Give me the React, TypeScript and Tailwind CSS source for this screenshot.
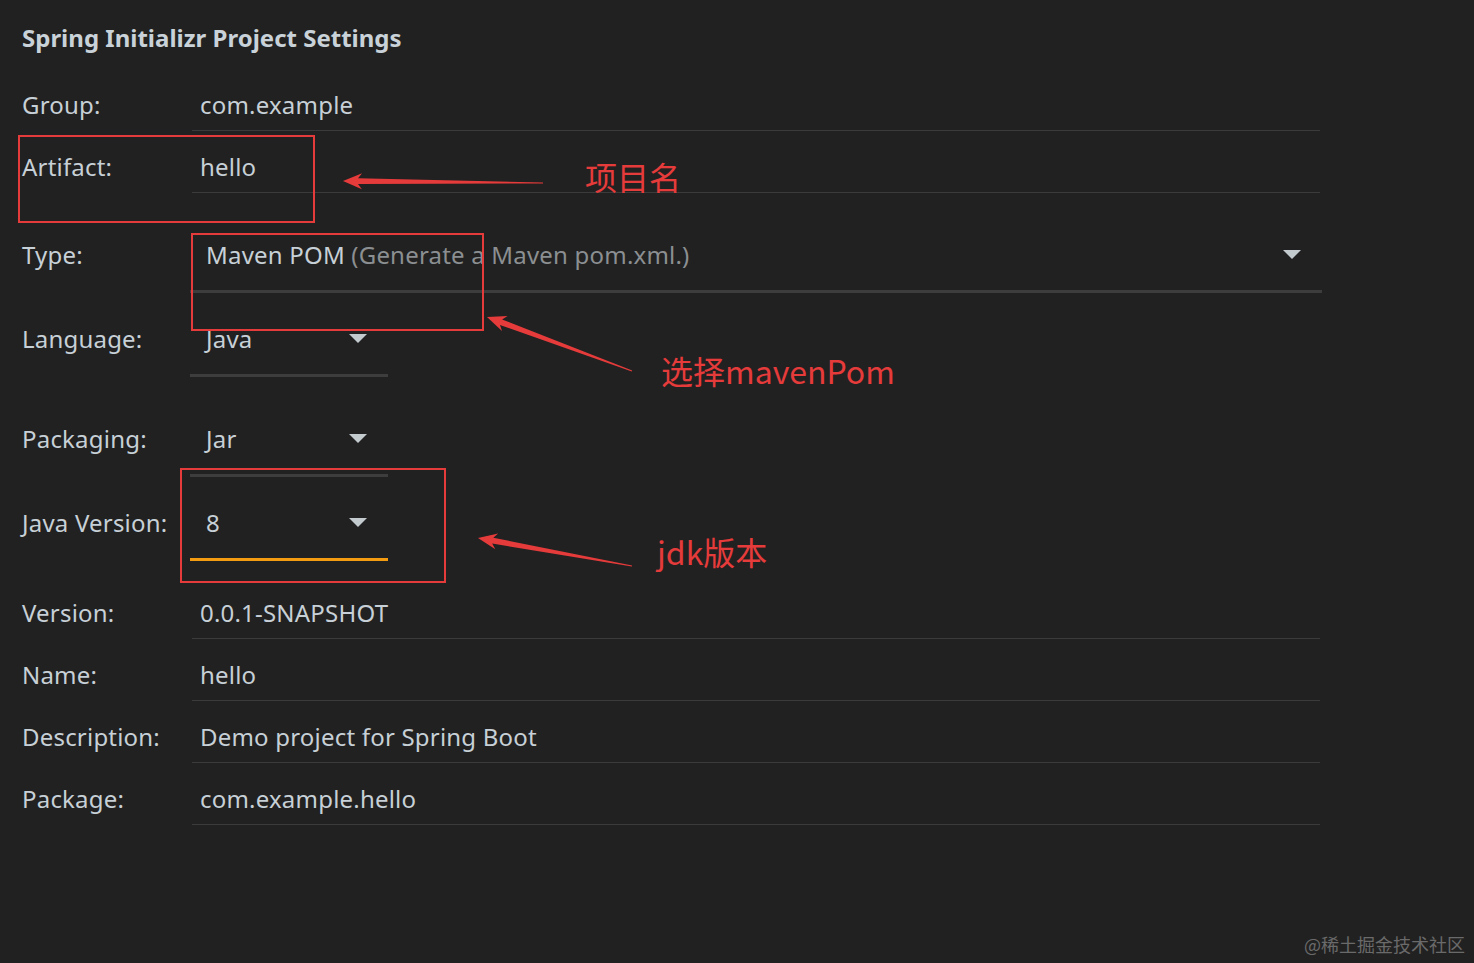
import React from "react";

type Pt = [number, number];

const arrowPoints = (tip: Pt, tail: Pt) => {
  const dx = tail[0] - tip[0];
  const dy = tail[1] - tip[1];
  const len = Math.hypot(dx, dy);
  const ux = dx / len;
  const uy = dy / len;
  const px = -uy;
  const py = ux;
  const at = (d: number, w: number): string =>
    `${(tip[0] + ux * d + px * w).toFixed(1)},${(tip[1] + uy * d + py * w).toFixed(1)}`;
  return [
    at(0, 0),
    at(19, 8),
    at(15, 3),
    at(len, 0.5),
    at(len, -0.5),
    at(15, -3),
    at(19, -8),
  ].join(" ");
};

const TextRow = ({ label, value, pad }: { label: string; value: string; pad: string }) => (
  <div className={`flex ${pad}`}>
    <div className="w-[170px] h-[30px] leading-[30px] whitespace-nowrap">{label}</div>
    <div className="w-[1128px] pl-2 pb-[10px] border-b border-[#3b3b3b] h-[41px] leading-[30px]">
      {value}
    </div>
  </div>
);

const Caret = () => (
  <svg width="18" height="10" viewBox="0 0 18 10" className="shrink-0">
    <polygon points="0,0 18,0 9,9" fill="#c3cbcf" />
  </svg>
);

const SelectRow = ({
  label,
  children,
  pad,
  wide,
  line,
}: {
  label: string;
  children: React.ReactNode;
  pad: string;
  wide?: boolean;
  line: string;
}) => (
  <div className={`flex ${pad}`}>
    <div className="w-[168px] h-[30px] leading-[30px] whitespace-nowrap">{label}</div>
    <div
      className={`${wide ? "w-[1132px]" : "w-[198px]"} pr-[21px] pl-4 pb-5 border-b-[3px] ${line} flex items-center justify-between h-[53px]`}
    >
      <div className="leading-[30px] h-[30px] whitespace-nowrap">{children}</div>
      <Caret />
    </div>
  </div>
);

const Note = ({ children, pos }: { children: React.ReactNode; pos: string }) => (
  <div
    className={`absolute ${pos} text-[32px] leading-[40px] tracking-normal text-[#e63b3b] whitespace-nowrap`}
    style={{ fontFamily: '"Noto Sans CJK SC", sans-serif' }}
  >
    {children}
  </div>
);

const App = () => {
  const red = "#e63b3b";
  return (
    <div
      className="relative w-full h-[963px] bg-[#212121] text-[#c7d0d6] text-[24px] tracking-[0.2px] overflow-hidden"
      style={{ fontFamily: '"Noto Sans", "Open Sans", sans-serif' }}
    >
      <div className="pl-[22px] pt-[22px]">
        <div className="h-[32px] leading-[32px] font-bold text-[24px] tracking-normal text-[#c9d2d8]">
          Spring Initializr Project Settings
        </div>
        <TextRow label="Group:" value="com.example" pad="pt-[36px]" />
        <TextRow label="Artifact:" value="hello" pad="pt-[21px]" />
        <SelectRow label="Type:" pad="pt-[47px]" wide line="border-[#3d3d3d]">
          Maven POM <span className="text-[#8b8f91]">(Generate a Maven pom.xml.)</span>
        </SelectRow>
        <SelectRow label="Language:" pad="pt-[31px]" line="border-[#3d3d3d]">
          Java
        </SelectRow>
        <SelectRow label="Packaging:" pad="pt-[47px]" line="border-[#3d3d3d]">
          Jar
        </SelectRow>
        <SelectRow label="Java Version:" pad="pt-[31px]" line="border-[#f39c12]">
          8
        </SelectRow>
        <TextRow label="Version:" value="0.0.1-SNAPSHOT" pad="pt-[37px]" />
        <TextRow label="Name:" value="hello" pad="pt-[21px]" />
        <TextRow label="Description:" value="Demo project for Spring Boot" pad="pt-[21px]" />
        <TextRow label="Package:" value="com.example.hello" pad="pt-[21px]" />
      </div>

      {/* annotations drawn over the form */}
      <div className="absolute left-[18px] top-[135px] w-[297px] h-[88px] border-2 border-[#e63b3b]" />
      <div className="absolute left-[191px] top-[233px] w-[293px] h-[98px] border-2 border-[#e63b3b]" />
      <div className="absolute left-[180px] top-[468px] w-[266px] h-[115px] border-2 border-[#e63b3b]" />

      <svg className="absolute inset-0 pointer-events-none" width="1474" height="963">
        <polygon points={arrowPoints([343, 181], [543, 183])} fill={red} />
        <polygon points={arrowPoints([487, 317], [632, 371])} fill={red} />
        <polygon points={arrowPoints([478, 538], [632, 566])} fill={red} />
      </svg>

      <Note pos="left-[585px] top-[156px]">项目名</Note>
      <Note pos="left-[661px] top-[350px]">选择mavenPom</Note>
      <Note pos="left-[657px] top-[531px]">jdk版本</Note>

      <div
        className="absolute right-[9px] top-[932px] text-[18px] leading-[24px] tracking-normal text-[#6a6a6a]"
        style={{ fontFamily: '"Noto Sans CJK SC", sans-serif' }}
      >
        @稀土掘金技术社区
      </div>
    </div>
  );
};

export default App;
